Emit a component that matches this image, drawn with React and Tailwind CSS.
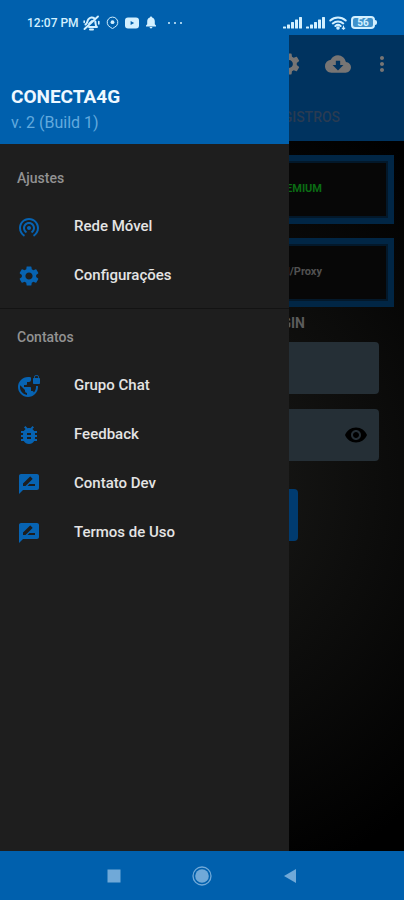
import { useState } from 'react'
import {
  MdBugReport,
  MdCloudDownload,
  MdMoreVert,
  MdRateReview,
  MdSettings,
  MdVisibility,
  MdVpnLock,
  MdWifiTethering,
} from 'react-icons/md'

const sections = [
  {
    title: 'Ajustes',
    items: [
      { label: 'Rede Móvel', icon: MdWifiTethering },
      { label: 'Configurações', icon: MdSettings },
    ],
  },
  {
    title: 'Contatos',
    items: [
      { label: 'Grupo Chat', icon: MdVpnLock },
      { label: 'Feedback', icon: MdBugReport },
      { label: 'Contato Dev', icon: MdRateReview },
      { label: 'Termos de Uso', icon: MdRateReview },
    ],
  },
]

function MutedBellIcon() {
  return (
    <svg width="17" height="16" viewBox="0 0 17 16" fill="none" stroke="currentColor" strokeLinecap="round" strokeLinejoin="round">
      <path d="M2.500 9.500C4.500 8.500 4 6 5.500 4.200 7 2.400 9.500 2 11.300 3.300M6 12h8c-1.800-1.200-1.300-3.500-1.700-5.500" strokeWidth="2" />
      <path d="M7 14.500h3" strokeWidth="2" />
      <path d="M1.500 14 15 1.500" strokeWidth="1.900" />
      <path d="M1.200 6v1.500M15.800 6.500v2.500M6 8.500 9 5.800" strokeWidth="1.600" />
    </svg>
  )
}

function TargetIcon() {
  return (
    <svg width="13" height="13" viewBox="0 0 13 13" fill="none" stroke="currentColor">
      <path d="M4.300 11.200A5.300 5.300 0 1 1 8.700 11.200L6.500 12.600z" strokeWidth="1" />
      <circle cx="6.500" cy="6.200" r="1.900" fill="currentColor" stroke="none" />
    </svg>
  )
}

function VideoIcon() {
  return (
    <svg width="14" height="12" viewBox="0 0 14 12">
      <rect y="0.500" width="14" height="11" rx="3" fill="currentColor" />
      <path d="M5.600 4v4l3.600-2z" fill="#0060ad" />
    </svg>
  )
}

function BellIcon() {
  return (
    <svg width="12" height="13" viewBox="0 0 12 13" fill="currentColor">
      <path d="M6 0.500c.7 0 1.100.5 1.100 1.100C8.900 2.100 9.800 3.600 9.800 5.400v2.800l1.200 1.300v.9H1v-.9l1.200-1.300V5.400c0-1.800.9-3.300 2.700-3.800C4.900 1 5.300.5 6 .5zM4.600 11.100h2.800c0 .8-.6 1.400-1.400 1.400s-1.400-.6-1.400-1.400z" />
    </svg>
  )
}

function SignalIcon() {
  return (
    <svg width="19" height="12" viewBox="0 0 19 12" fill="currentColor">
      <rect x="0" y="9.500" width="3" height="2" rx="0.500" />
      <rect x="4" y="7.500" width="3" height="4" rx="0.500" />
      <rect x="8" y="5" width="3" height="6.500" rx="0.500" />
      <rect x="12" y="2.500" width="3" height="9" rx="0.500" />
      <rect x="16" y="0" width="3" height="11.500" rx="0.500" />
    </svg>
  )
}

function WifiIcon() {
  return (
    <svg width="18" height="14" viewBox="0 0 18 14" fill="none" stroke="currentColor" strokeWidth="2" strokeLinecap="round">
      <path d="M1.300 4.500c4.500-4 10.900-4 15.400 0M3.800 7.400c3-2.700 7.400-2.700 10.400 0M6.400 10c1.500-1.300 3.700-1.300 5.200 0" />
      <circle cx="9" cy="12" r="0.800" fill="currentColor" />
      <path d="M14.500 10v3M13.200 12l1.300 1.200 1.300-1.200" strokeWidth="1.100" />
    </svg>
  )
}

function StatusBar() {
  return (
    <header className="flex h-[35px] shrink-0 items-center justify-between bg-[#0060ad] pt-[10px] pr-[27px] pl-[27px] text-[#d3f0ff]">
      <div className="flex items-center">
        <span className="text-xs font-medium">12:07 PM</span>
        <div className="ml-1 flex items-center gap-[6px]">
          <MutedBellIcon />
          <TargetIcon />
          <VideoIcon />
          <BellIcon />
        </div>
        <div className="ml-[11px] flex gap-1">
          <span className="size-[2px] rounded-full bg-current" />
          <span className="size-[2px] rounded-full bg-current" />
          <span className="size-[2px] rounded-full bg-current" />
        </div>
      </div>
      <div className="flex items-center gap-1">
        <SignalIcon />
        <SignalIcon />
        <WifiIcon />
        <div className="flex items-center">
          <span className="flex h-[13px] w-6 items-center justify-center rounded-sm border-2 border-current bg-[#3f92cc] text-[10px] leading-none font-bold">
            56
          </span>
          <span className="h-[5px] w-[2px] rounded-r-sm bg-current" />
        </div>
      </div>
    </header>
  )
}

function Panel({ children }) {
  return (
    <div className="flex h-[69px] items-center justify-end border-6 border-[#012645] bg-[#070707] pr-[66px] text-[11px] font-bold shadow-[inset_0_0_0_2px_#03182a]">
      {children}
    </div>
  )
}

function HomeScreen() {
  const [visible, setVisible] = useState(false)

  return (
    <main className="flex flex-1 flex-col bg-[radial-gradient(85%_50%_at_50%_55%,#1a1a18,#000)]">
      <div className="bg-[#00335f] text-[#777574]">
        <div className="flex h-[58px] items-center justify-end pr-[10px]">
          <button aria-label="Configurações" className="mr-[23px]">
            <MdSettings size={26} />
          </button>
          <button aria-label="Baixar" className="mr-[19px]">
            <MdCloudDownload size={26} />
          </button>
          <button aria-label="Mais opções">
            <MdMoreVert size={24} />
          </button>
        </div>
        <div className="flex h-12 text-sm font-medium text-[#293b52]">
          <button aria-label="Início" className="flex-1" />
          <button className="flex-1">REGISTROS</button>
        </div>
      </div>

      <div className="flex flex-col gap-[14px] px-[10px] pt-[14px]">
        <Panel>
          <span className="text-[#0b6c14]">PREMIUM</span>
        </Panel>
        <Panel>
          <span className="text-[#515151]">SSH/Proxy</span>
        </Panel>
      </div>

      <form className="flex flex-col px-[25px] pt-[6px]" onSubmit={(e) => e.preventDefault()}>
        <h2 className="pr-[74px] text-right text-sm leading-5 font-bold text-[#5b5b5b]">LOGIN</h2>
        <input aria-label="Usuário" className="mt-[9px] h-[52px] w-full rounded-sm bg-[#252f36] px-3 text-gray-400" />
        <div className="mt-[15px] flex h-[52px] rounded-sm bg-[#252f36]">
          <input
            aria-label="Senha"
            type={visible ? 'text' : 'password'}
            className="min-w-0 flex-1 bg-transparent px-3 text-gray-400"
          />
          <button type="button" aria-label="Mostrar senha" className="px-[11px] text-black" onClick={() => setVisible(!visible)}>
            <MdVisibility size={24} />
          </button>
        </div>
        <button aria-label="Entrar" className="mt-7 h-[52px] w-48 self-center rounded-sm bg-[#003b70]" />
      </form>
    </main>
  )
}

function Drawer() {
  return (
    <aside className="absolute inset-y-0 left-0 w-[289px] bg-[#1e1e1e]">
      <div className="h-[109px] bg-[#0060ad] px-[11px] pt-[50px]">
        <h1 className="text-[19px] leading-6 font-bold text-[#eef8ff]">CONECTA4G</h1>
        <p className="text-base leading-7 text-[#62aade]">v. 2 (Build 1)</p>
      </div>
      <nav className="divide-y divide-[#131313] pt-[2px]">
        {sections.map((section) => (
          <section key={section.title} className="pt-[3px] pb-2 first:pt-[7px]">
            <h2 className="flex h-[49px] items-center px-[17px] text-sm font-medium text-[#929292]">{section.title}</h2>
            {section.items.map(({ label, icon: Icon }) => (
              <a key={label} href="#" className="flex h-[49px] items-center gap-[33px] px-[17px] text-[#e4e4e4]">
                <Icon size={24} className="text-[#0763b2]" />
                <span className="text-[15px] font-medium">{label}</span>
              </a>
            ))}
          </section>
        ))}
      </nav>
    </aside>
  )
}

function NavigationBar() {
  return (
    <footer className="flex h-[49px] shrink-0 items-center justify-center gap-[68px] bg-[#0060ad] text-[#70a9d8]">
      <button aria-label="Recentes" className="p-[1px]">
        <svg width="18" height="18" viewBox="0 0 18 18" fill="currentColor">
          <rect x="2.500" y="2.500" width="13" height="13" />
        </svg>
      </button>
      <button aria-label="Início">
        <svg width="20" height="20" viewBox="0 0 20 20" fill="currentColor">
          <circle cx="10" cy="10" r="9" fill="none" stroke="currentColor" strokeWidth="1.300" />
          <circle cx="10" cy="10" r="6.800" />
        </svg>
      </button>
      <button aria-label="Voltar" className="p-[1px]">
        <svg width="18" height="18" viewBox="0 0 18 18" fill="currentColor">
          <path d="M15 2v14L3 9z" />
        </svg>
      </button>
    </footer>
  )
}

export default function App() {
  return (
    <div className="flex min-h-screen flex-col bg-black font-[Roboto,sans-serif]">
      <StatusBar />
      <div className="relative flex flex-1 flex-col">
        <HomeScreen />
        <Drawer />
      </div>
      <NavigationBar />
    </div>
  )
}
